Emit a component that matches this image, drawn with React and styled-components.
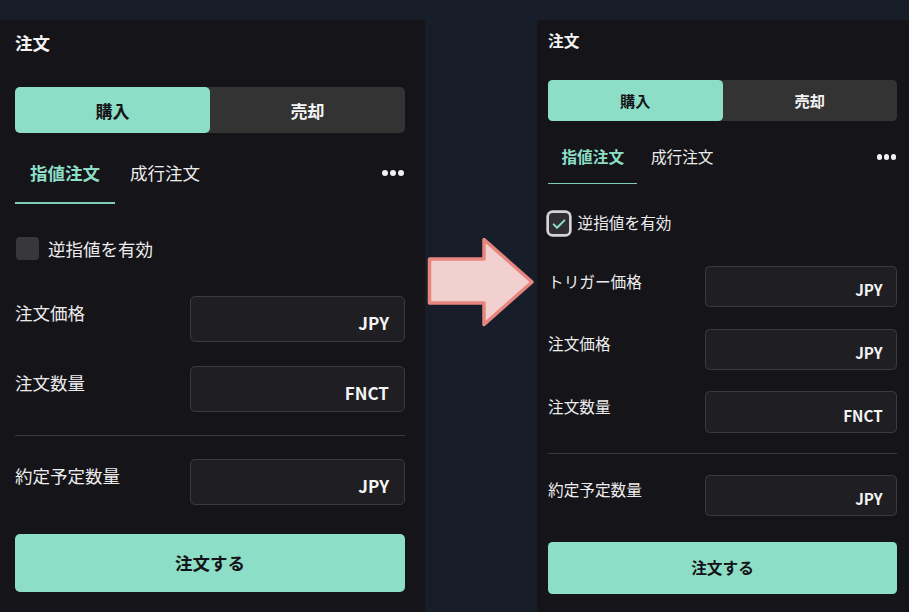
import React from 'react';
import styled, { createGlobalStyle } from 'styled-components';

const FONT = `"Noto Sans CJK JP", "Noto Sans", sans-serif`;

const GlobalStyle = createGlobalStyle`
  html, body {
    margin: 0;
    padding: 0;
    background: #181e29;
  }
  body {
    font-family: ${FONT};
    color: #ededed;
  }
`;

const Page = styled.div`
  display: flex;
  align-items: stretch;
  height: 612px;
  padding-top: 20px;
  box-sizing: border-box;
  overflow: hidden;
`;

const Panel = styled.section`
  flex: none;
  width: ${p => p.$width}px;
  padding: 11px ${p => p.$padRight}px 0 ${p => p.$padLeft}px;
  box-sizing: border-box;
  background: #151419;
  zoom: ${p => p.$zoom || 1};
`;

const Gutter = styled.div`
  flex: none;
  width: 112px;
  display: flex;
  justify-content: center;
  padding-top: 216px;
`;

const Title = styled.h2`
  margin: 0;
  font-size: 17.5px;
  font-weight: 700;
  line-height: 24px;
  color: #f3f3f3;
`;

const Segmented = styled.div`
  display: flex;
  height: 46px;
  margin-top: 32px;
  border-radius: 5px;
  background: #333333;
`;

const SegmentButton = styled.button`
  flex: 1;
  border: 0;
  border-radius: 5px;
  background: ${p => (p.$active ? '#8ddec6' : 'transparent')};
  color: ${p => (p.$active ? '#141418' : '#f5f5f5')};
  font: 700 17px/1 ${FONT};
`;

const TabRow = styled.div`
  display: flex;
  align-items: flex-start;
  margin-top: 20px;
`;

const Tab = styled.button`
  padding: 8px 15px 17px;
  border: 0;
  border-bottom: 2px solid ${p => (p.$active ? '#7fcdb5' : 'transparent')};
  background: transparent;
  color: ${p => (p.$active ? '#8ddec6' : '#ececec')};
  font: ${p => (p.$active ? 700 : 400)} 17.5px/24px ${FONT};
`;

const More = styled.div`
  display: flex;
  gap: 2px;
  margin: 17px 1px 0 auto;
`;

const Dot = styled.span`
  width: 6px;
  height: 6px;
  border-radius: 50%;
  background: #f2f2f2;
`;

const CheckRow = styled.label`
  display: flex;
  align-items: center;
  gap: 9px;
  margin-top: 33px;
  font-size: 17.5px;
  line-height: 23px;
  color: #ececec;
`;

const CheckBox = styled.span`
  display: flex;
  align-items: center;
  justify-content: center;
  width: 23px;
  height: 23px;
  margin-left: 1px;
  border-radius: 4px;
  background: ${p => (p.$checked ? '#2f2f33' : '#37373c')};
  box-shadow: ${p => (p.$checked ? '0 0 0 3px #d4d4d4' : 'none')};
`;

const Fields = styled.div`
  display: flex;
  flex-direction: column;
  gap: 24px;
  margin-top: 36px;
`;

const FieldRow = styled.div`
  display: flex;
  align-items: flex-start;
  justify-content: space-between;
`;

const FieldLabel = styled.span`
  padding-top: 5px;
  font-size: 17.5px;
  line-height: 24px;
  color: #ececec;
`;

const InputBox = styled.div`
  display: flex;
  align-items: center;
  justify-content: flex-end;
  width: 215px;
  height: 46px;
  padding: 8px 15px 0 0;
  box-sizing: border-box;
  border: 1px solid #3a3a3f;
  border-radius: 5px;
  background: #1f1f23;
  font-size: 17px;
  font-weight: 700;
  line-height: 20px;
  color: #f4f4f4;
`;

const Divider = styled.hr`
  margin: -1px 0 -1px;
  border: 0;
  border-top: 1px solid #38383d;
`;

const SubmitButton = styled.button`
  width: 100%;
  height: 58px;
  margin-top: 29px;
  border: 0;
  border-radius: 5px;
  background: #8ddec6;
  color: #141418;
  font: 700 17.5px/1 ${FONT};
`;

const Check = () => (
  <svg width="18" height="18" viewBox="0 0 24 24" fill="none" stroke="#8ddec6" strokeWidth="3" strokeLinecap="round" strokeLinejoin="round">
    <path d="M4 12.5l5 5L20 6.5" />
  </svg>
);

const Arrow = () => (
  <svg width="110" height="92" viewBox="0 0 110 92">
    <path
      d="M3.5 23 H58 V3.5 L106 46 L58 88.5 V67 H3.5 Z"
      fill="#f2d0cf"
      stroke="#e7867e"
      strokeWidth="3.5"
      strokeLinejoin="round"
    />
  </svg>
);

const OrderForm = ({ stop, ...panel }) => {
  const fields = [
    ...(stop ? [['トリガー価格', 'JPY']] : []),
    ['注文価格', 'JPY'],
    ['注文数量', 'FNCT'],
  ];

  return (
    <Panel { ...panel }>
      <Title>注文</Title>
      <Segmented>
        <SegmentButton $active>購入</SegmentButton>
        <SegmentButton>売却</SegmentButton>
      </Segmented>
      <TabRow>
        <Tab $active>指値注文</Tab>
        <Tab>成行注文</Tab>
        <More>
          <Dot />
          <Dot />
          <Dot />
        </More>
      </TabRow>
      <CheckRow>
        <CheckBox $checked={ stop }>{ stop && <Check /> }</CheckBox>
        逆指値を有効
      </CheckRow>
      <Fields>
        {
          fields.map(([label, unit]) => (
            <FieldRow key={ label }>
              <FieldLabel>{ label }</FieldLabel>
              <InputBox>{ unit }</InputBox>
            </FieldRow>
          ))
        }
        <Divider />
        <FieldRow>
          <FieldLabel>約定予定数量</FieldLabel>
          <InputBox>JPY</InputBox>
        </FieldRow>
      </Fields>
      <SubmitButton>注文する</SubmitButton>
    </Panel>
  );
};

const App = () => (
  <React.Fragment>
    <GlobalStyle />
    <Page>
      <OrderForm $width={ 425 } $padLeft={ 15 } $padRight={ 20 } />
      <Gutter>
        <Arrow />
      </Gutter>
      <OrderForm stop $width={ 416 } $padLeft={ 12.3 } $padRight={ 13.7 } $zoom={ 0.895 } />
    </Page>
  </React.Fragment>
);

export default App;
